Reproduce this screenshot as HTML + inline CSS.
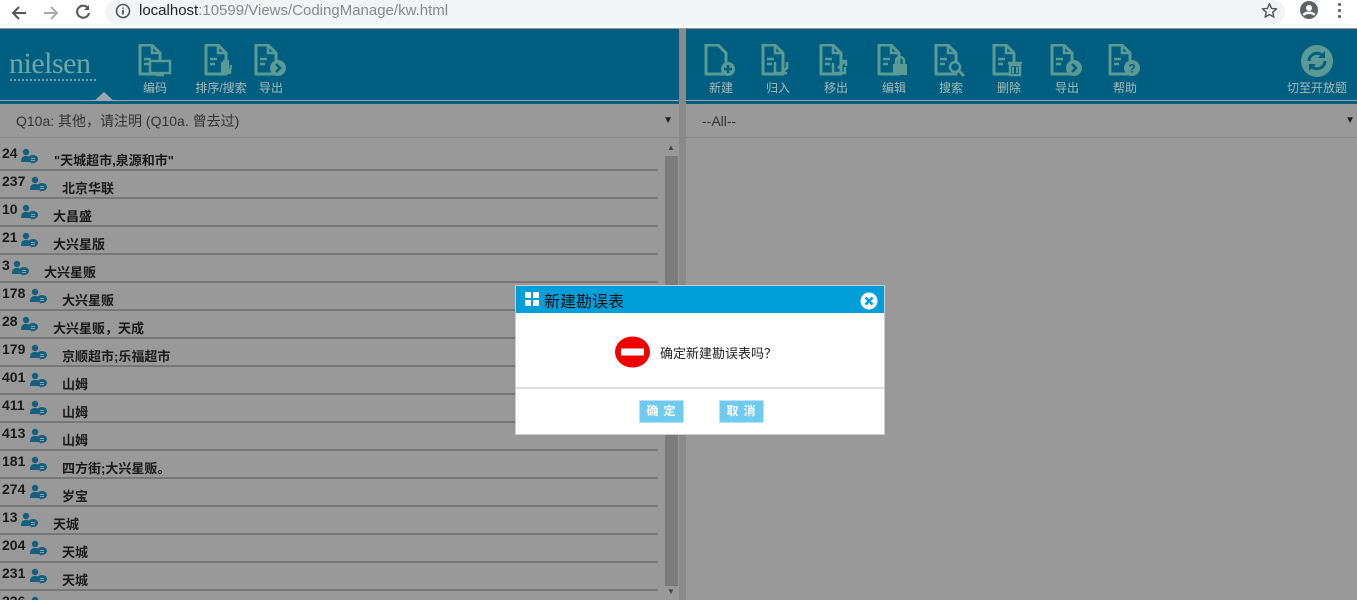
<!DOCTYPE html>
<html><head><meta charset="utf-8">
<style>
*{margin:0;padding:0;box-sizing:border-box}
html{width:1357px;height:600px;overflow:hidden}
body{width:1357px;height:600px;overflow:hidden;background:#999;font-family:"Liberation Sans","Noto Sans CJK SC",sans-serif;position:relative}
.bar{position:absolute;left:0;top:0;width:1357px;height:28px;background:#fff}
.url{position:absolute;left:105px;top:0;width:1180px;height:24px;background:#f1f3f4;border-radius:12px;font-size:15px;line-height:22px;padding-left:34px;color:#888}
.url b{font-weight:normal;color:#222}
.hdr{position:absolute;top:29px;height:75px;background:#005f80;border-bottom:3px solid #005f80}
.hdr:after{content:"";position:absolute;left:0;right:0;top:71px;height:1px;background:#9aa8ae}
.ico{position:absolute;top:15px;text-align:center;font-size:12px;color:#a8b9b9;width:50px}
.ico svg{display:block;margin:0 auto 1px}
.sel{position:absolute;top:104px;height:34px;border-bottom:1px solid #888;font-size:14px;color:#333;line-height:34px}
.list{position:absolute;left:0;top:0;width:660px;height:600px;overflow:hidden}
.row{position:absolute;left:0;width:658px;height:28px;border-bottom:2px solid #777;font-size:13px;color:#1a1a1a;font-weight:bold}
.row .n{position:absolute;left:2px;top:2px;font-size:14px}
.row .t{position:absolute;top:7px;font-weight:bold}
.row svg{position:absolute;top:5px}
</style></head><body>
<div class="bar">
<svg style="position:absolute;left:10px;top:4px" width="18" height="18" viewBox="0 0 18 18"><path d="M16 9H3M9 3L3 9l6 6" stroke="#555" stroke-width="2" fill="none"/></svg>
<svg style="position:absolute;left:42px;top:4px" width="18" height="18" viewBox="0 0 18 18"><path d="M2 9h13M9 3l6 6-6 6" stroke="#aaa" stroke-width="2" fill="none"/></svg>
<svg style="position:absolute;left:74px;top:3px" width="18" height="18" viewBox="0 0 18 18"><path d="M14.5 6A6 6 0 1 0 15 10" stroke="#555" stroke-width="2" fill="none"/><path d="M15 2v5h-5z" fill="#555"/></svg>
<div class="url"><svg style="position:absolute;left:10px;top:3px" width="16" height="16" viewBox="0 0 16 16"><circle cx="8" cy="8" r="6.5" stroke="#555" stroke-width="1.6" fill="none"/><path d="M8 7v4.5M8 4.5v1.3" stroke="#555" stroke-width="1.8"/></svg><b>localhost</b>:10599/Views/CodingManage/kw.html</div>
<svg style="position:absolute;left:1261px;top:2px" width="17" height="17" viewBox="0 0 24 24"><path d="M12 2.5l2.9 6.6 7.1.6-5.4 4.7 1.6 7-6.2-3.7-6.2 3.7 1.6-7L2 9.7l7.1-.6z" fill="none" stroke="#555" stroke-width="2" stroke-linejoin="round"/></svg>
<svg style="position:absolute;left:1300px;top:1px" width="18" height="18" viewBox="0 0 18 18"><circle cx="9" cy="9" r="9" fill="#5f6368"/><circle cx="9" cy="7" r="3" fill="#fff"/><path d="M3.5 14c2-3 9-3 11 0" stroke="#fff" stroke-width="2.5" fill="none"/></svg>
<div style="position:absolute;left:1338px;top:3px;width:3px;font-size:0"><i style="display:block;width:3px;height:3px;background:#555;border-radius:2px;margin-bottom:3px"></i><i style="display:block;width:3px;height:3px;background:#555;border-radius:2px;margin-bottom:3px"></i><i style="display:block;width:3px;height:3px;background:#555;border-radius:2px"></i></div>
</div>

<svg width="0" height="0" style="position:absolute"><defs>
<g id="doc"><path d="M3 1h12l8 8v21H3z" fill="none" stroke="#5b9a95" stroke-width="3" stroke-linejoin="round"/><path d="M15 1v8h8" fill="none" stroke="#5b9a95" stroke-width="2.5"/><path d="M7 15h7M7 20h5" stroke="#5b9a95" stroke-width="2.5"/></g>
<g id="u"><circle cx="5" cy="4" r="3.2" fill="#13617f"/><path d="M0 14c0-5 2-6 5-6s4 1 5 3v3z" fill="#13617f"/><ellipse cx="12" cy="11" rx="5" ry="4" fill="#13617f"/><path d="M10 16l1-2h2z" fill="#13617f"/><path d="M10 10.5h4M10 12.5h4" stroke="#9a9a9a" stroke-width="1"/></g>
</defs></svg>

<div class="hdr" style="left:0;width:679px">
<div style="position:absolute;left:9px;top:18px;font-family:'Liberation Serif',serif;font-size:30px;color:#6fa7a6;letter-spacing:-0.5px">nielsen</div>
<div style="position:absolute;left:10px;top:50px;width:86px;border-top:2px dotted #6fa7a6"></div>
<div style="position:absolute;left:94px;top:63px;width:0;height:0;border-left:10px solid transparent;border-right:10px solid transparent;border-bottom:9px solid #9aa8ae"></div>
<div class="ico" style="left:130px"><svg width="36" height="34" viewBox="0 0 36 34"><use href="#doc"/><rect x="13" y="17" width="20" height="12" fill="#005f80" stroke="#5b9a95" stroke-width="2.5"/><path d="M19 31h8" stroke="#5b9a95" stroke-width="2.5"/></svg>编码</div>
<div class="ico" style="left:195px;width:52px"><svg width="36" height="34" viewBox="0 0 36 34"><use href="#doc"/><path d="M18 30V18h2v7-9h2v9-10h2v10-9h2v10l1-5h2l-1 9z" fill="#5b9a95"/></svg>排序/搜索</div>
<div class="ico" style="left:246px"><svg width="36" height="34" viewBox="0 0 36 34"><use href="#doc"/><circle cx="25" cy="24" r="8" fill="#5b9a95"/><path d="M23 20l4 4-4 4" stroke="#005f80" stroke-width="2.5" fill="none"/></svg>导出</div>
</div>
<div style="position:absolute;left:679px;top:29px;width:7px;height:571px;background:#8a8a8a"></div>
<div class="hdr" style="left:686px;width:671px">
<div class="ico" style="left:10px"><svg width="36" height="34" viewBox="0 0 36 34"><path d="M3 1h12l8 8v21H3z" fill="none" stroke="#5b9a95" stroke-width="3" stroke-linejoin="round"/><circle cx="25" cy="25" r="7" fill="#5b9a95"/><path d="M25 21v8M21 25h8" stroke="#005f80" stroke-width="2.5"/></svg>新建</div>
<div class="ico" style="left:67px"><svg width="36" height="34" viewBox="0 0 36 34"><use href="#doc"/><path d="M15 18v11h12M27 18v6l-6 5" stroke="#5b9a95" stroke-width="2.5" fill="none"/></svg>归入</div>
<div class="ico" style="left:125px"><svg width="36" height="34" viewBox="0 0 36 34"><use href="#doc"/><path d="M15 19v10h12v-6M20 24l7-7M23 17h5v5" stroke="#5b9a95" stroke-width="2.5" fill="none"/></svg>移出</div>
<div class="ico" style="left:183px"><svg width="36" height="34" viewBox="0 0 36 34"><use href="#doc"/><rect x="17" y="20" width="14" height="11" fill="#5b9a95"/><path d="M20 20v-3a4 4 0 0 1 8 0v3" stroke="#5b9a95" stroke-width="2.5" fill="none"/></svg>编辑</div>
<div class="ico" style="left:240px"><svg width="36" height="34" viewBox="0 0 36 34"><use href="#doc"/><circle cx="22" cy="23" r="5" fill="#005f80" stroke="#5b9a95" stroke-width="2.5"/><path d="M26 27l5 5" stroke="#5b9a95" stroke-width="3"/></svg>搜索</div>
<div class="ico" style="left:298px"><svg width="36" height="34" viewBox="0 0 36 34"><use href="#doc"/><path d="M17 19h14M19 21h10v10H19z" stroke="#5b9a95" stroke-width="2.5" fill="#005f80"/><path d="M22 23v6M26 23v6" stroke="#5b9a95" stroke-width="2"/></svg>删除</div>
<div class="ico" style="left:356px"><svg width="36" height="34" viewBox="0 0 36 34"><use href="#doc"/><circle cx="25" cy="24" r="8" fill="#5b9a95"/><path d="M23 20l4 4-4 4" stroke="#005f80" stroke-width="2.5" fill="none"/></svg>导出</div>
<div class="ico" style="left:414px"><svg width="36" height="34" viewBox="0 0 36 34"><use href="#doc"/><circle cx="25" cy="24" r="8" fill="#5b9a95"/><text x="25" y="28.5" font-size="12" font-weight="bold" text-anchor="middle" fill="#005f80" font-family="Liberation Sans">?</text></svg>帮助</div>
<div class="ico" style="left:596px;width:70px"><svg width="36" height="34" viewBox="0 0 36 34"><circle cx="18" cy="17" r="16" fill="#5b9a95"/><path d="M10 17a8 8 0 0 1 14-5M26 17a8 8 0 0 1-14 5" stroke="#005f80" stroke-width="3" fill="none"/><path d="M26 7v7h-7zM10 27v-7h7z" fill="#005f80"/></svg>切至开放题</div>
</div>

<div class="sel" style="left:0;width:679px;padding-left:16px">Q10a: 其他，请注明 (Q10a. 曾去过)<span style="position:absolute;right:6px;top:0;font-size:10px;color:#222">▼</span></div>
<div class="sel" style="left:686px;width:671px;padding-left:16px">--All--<span style="position:absolute;right:2px;top:0;font-size:10px;color:#222">▼</span></div>

<div style="position:absolute;left:663px;top:141px;width:16px;height:459px;background:#999"></div>
<div style="position:absolute;left:665px;top:156px;width:13px;height:430px;background:#7b7b7b"></div>
<div style="position:absolute;left:667px;top:143px;font-size:8px;color:#444">▲</div>
<div style="position:absolute;left:667px;top:587px;font-size:8px;color:#444">▼</div>

<div class="list">
<div class="row" style="top:143px"><span class="n">24</span><svg style="left:21px" width="18" height="17"><use href="#u"/></svg><span class="t" style="left:54px">"天城超市,泉源和市"</span></div>
<div class="row" style="top:171px"><span class="n">237</span><svg style="left:30px" width="18" height="17"><use href="#u"/></svg><span class="t" style="left:62px">北京华联</span></div>
<div class="row" style="top:199px"><span class="n">10</span><svg style="left:21px" width="18" height="17"><use href="#u"/></svg><span class="t" style="left:53px">大昌盛</span></div>
<div class="row" style="top:227px"><span class="n">21</span><svg style="left:21px" width="18" height="17"><use href="#u"/></svg><span class="t" style="left:53px">大兴星版</span></div>
<div class="row" style="top:255px"><span class="n">3</span><svg style="left:12px" width="18" height="17"><use href="#u"/></svg><span class="t" style="left:44px">大兴星贩</span></div>
<div class="row" style="top:283px"><span class="n">178</span><svg style="left:30px" width="18" height="17"><use href="#u"/></svg><span class="t" style="left:62px">大兴星贩</span></div>
<div class="row" style="top:311px"><span class="n">28</span><svg style="left:21px" width="18" height="17"><use href="#u"/></svg><span class="t" style="left:53px">大兴星贩，天成</span></div>
<div class="row" style="top:339px"><span class="n">179</span><svg style="left:30px" width="18" height="17"><use href="#u"/></svg><span class="t" style="left:62px">京顺超市;乐福超市</span></div>
<div class="row" style="top:367px"><span class="n">401</span><svg style="left:30px" width="18" height="17"><use href="#u"/></svg><span class="t" style="left:62px">山姆</span></div>
<div class="row" style="top:395px"><span class="n">411</span><svg style="left:30px" width="18" height="17"><use href="#u"/></svg><span class="t" style="left:62px">山姆</span></div>
<div class="row" style="top:423px"><span class="n">413</span><svg style="left:30px" width="18" height="17"><use href="#u"/></svg><span class="t" style="left:62px">山姆</span></div>
<div class="row" style="top:451px"><span class="n">181</span><svg style="left:30px" width="18" height="17"><use href="#u"/></svg><span class="t" style="left:62px">四方街;大兴星贩。</span></div>
<div class="row" style="top:479px"><span class="n">274</span><svg style="left:30px" width="18" height="17"><use href="#u"/></svg><span class="t" style="left:62px">岁宝</span></div>
<div class="row" style="top:507px"><span class="n">13</span><svg style="left:21px" width="18" height="17"><use href="#u"/></svg><span class="t" style="left:53px">天城</span></div>
<div class="row" style="top:535px"><span class="n">204</span><svg style="left:30px" width="18" height="17"><use href="#u"/></svg><span class="t" style="left:62px">天城</span></div>
<div class="row" style="top:563px"><span class="n">231</span><svg style="left:30px" width="18" height="17"><use href="#u"/></svg><span class="t" style="left:62px">天城</span></div>
<div class="row" style="top:591px"><span class="n">226</span><svg style="left:30px" width="18" height="17"><use href="#u"/></svg><span class="t" style="left:62px">天城，圆的福</span></div>
</div>

<div style="position:absolute;left:515px;top:285px;width:370px;height:150px;background:#fff;border:1px solid #ccc">
<div style="height:27px;background:#009fda;position:relative">
<svg style="position:absolute;left:9px;top:6px" width="14" height="14"><rect x="0" y="0" width="6" height="6" fill="#fff"/><rect x="8" y="0" width="6" height="6" fill="#fff"/><rect x="0" y="8" width="6" height="6" fill="#fff"/><rect x="8" y="8" width="6" height="6" fill="#fff"/></svg>
<span style="position:absolute;left:28px;top:2px;font-size:16px;color:#111">新建勘误表</span>
<svg style="position:absolute;left:344px;top:6px" width="18" height="18" viewBox="0 0 18 18"><circle cx="9" cy="9" r="8.5" fill="#fff"/><path d="M5.5 5.5l7 7M12.5 5.5l-7 7" stroke="#009fda" stroke-width="2.6"/></svg>
</div>
<svg style="position:absolute;left:99px;top:50px" width="35" height="32"><ellipse cx="17.5" cy="16" rx="17.5" ry="15.5" fill="#ee0000"/><rect x="6" y="12.5" width="23" height="7" fill="#fff"/></svg>
<span style="position:absolute;left:144px;top:57px;font-size:13px;color:#222">确定新建勘误表吗？</span>
<div style="position:absolute;left:0;top:101px;width:368px;height:2px;background:#e0e0e0"></div>
<div style="position:absolute;left:123px;top:114px;width:45px;height:23px;background:#6fcaef;border:1px solid #b9e4f5;color:#fff;font-size:12px;font-weight:bold;text-align:center;line-height:21px;letter-spacing:5px;padding-left:4px">确定</div>
<div style="position:absolute;left:203px;top:114px;width:45px;height:23px;background:#6fcaef;border:1px solid #b9e4f5;color:#fff;font-size:12px;font-weight:bold;text-align:center;line-height:21px;letter-spacing:5px;padding-left:4px">取消</div>
</div>
</body></html>
